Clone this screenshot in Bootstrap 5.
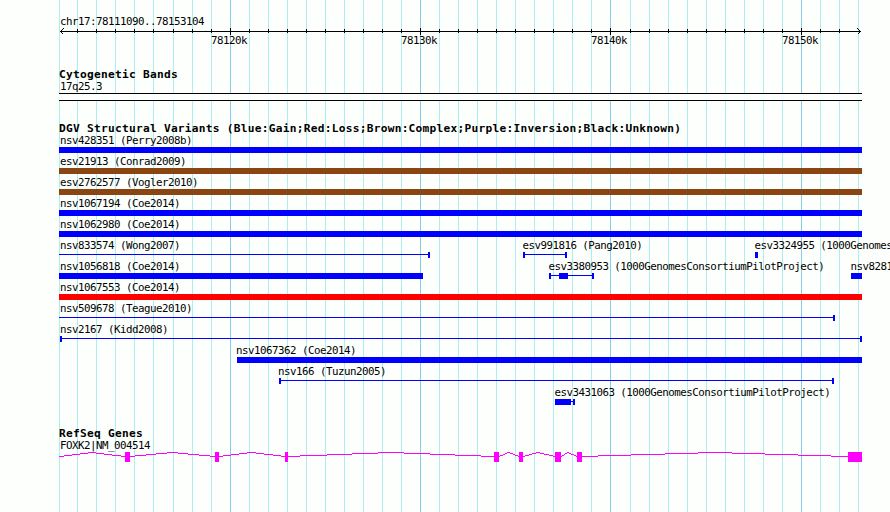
<!DOCTYPE html>
<html lang="en">
<head>
<meta charset="utf-8">
<meta name="viewport" content="width=device-width, initial-scale=1">
<title>chr17:78111090..78153104</title>
<link href="https://cdn.jsdelivr.net/npm/bootstrap@5.3.0/dist/css/bootstrap.min.css" rel="stylesheet">
<style>
body { background: #fdfffc; }
.browser-panel { width: 890px; height: 512px; }
.grid-layer { position: absolute; top: 0; left: 0; z-index: 0; }
.track-list { position: relative; z-index: 1; }
svg { display: block; flex: none; shape-rendering: crispEdges; }
text { font-family: "DejaVu Sans Mono", monospace; font-size: 10.8px; letter-spacing: -.502px; fill: #000; white-space: pre; }
.heading { font-weight: bold; font-size: 11.2px; letter-spacing: .257px; }
.gain { fill: #00f; }
.loss { fill: #f00; }
.complex { fill: #8b4513; }
.gene { fill: #f0f; }
.intron { fill: none; stroke: #f0f; stroke-width: 1; }
.minor { stroke: #afeeee; }
.major { stroke: #87ceeb; }
.ink { stroke: #000; fill: none; }
</style>
<script src="https://cdn.jsdelivr.net/npm/bootstrap@5.3.0/dist/js/bootstrap.bundle.min.js"></script>
</head>
<body>
<main class="browser-panel position-relative overflow-hidden">
  <!-- vertical scale lines: minor every 1 kb, major every 10 kb -->
  <svg class="grid-layer" width="890" height="512">
    <path class="minor" d="M59.5 0V512M77.5 0V512M96.5 0V512M115.5 0V512M134.5 0V512M153.5 0V512M173.5 0V512M192.5 0V512M211.5 0V512M249.5 0V512M268.5 0V512M287.5 0V512M306.5 0V512M325.5 0V512M344.5 0V512M363.5 0V512M382.5 0V512M401.5 0V512M439.5 0V512M458.5 0V512M477.5 0V512M496.5 0V512M515.5 0V512M534.5 0V512M553.5 0V512M572.5 0V512M591.5 0V512M630.5 0V512M649.5 0V512M668.5 0V512M687.5 0V512M706.5 0V512M725.5 0V512M744.5 0V512M763.5 0V512M782.5 0V512M820.5 0V512M839.5 0V512M858.5 0V512"/>
    <path class="major" d="M230.5 0V512M420.5 0V512M610.5 0V512M801.5 0V512"/>
  </svg>

  <div class="track-list d-flex flex-column">
    <!-- ruler -->
    <svg width="890" height="66">
      <path class="ink" d="M60 31.5H861M77.5 29V33M96.5 29V33M115.5 29V33M134.5 29V33M153.5 29V33M173.5 29V33M192.5 29V33M211.5 29V33M249.5 29V33M268.5 29V33M287.5 29V33M306.5 29V33M325.5 29V33M344.5 29V33M363.5 29V33M382.5 29V33M401.5 29V33M439.5 29V33M458.5 29V33M477.5 29V33M496.5 29V33M515.5 29V33M534.5 29V33M553.5 29V33M572.5 29V33M591.5 29V33M630.5 29V33M649.5 29V33M668.5 29V33M687.5 29V33M706.5 29V33M725.5 29V33M744.5 29V33M763.5 29V33M782.5 29V33M820.5 29V33M839.5 29V33M230.5 28V35M420.5 28V35M610.5 28V35M801.5 28V35"/>
      <path class="ink" d="M63.5 28.5L60.5 31.5L63.5 34.5M857.5 28.5L860.5 31.5L857.5 34.5"/>
      <text x="60" y="25">chr17:78111090..78153104</text>
      <text x="211" y="44">78120k</text>
      <text x="401" y="44">78130k</text>
      <text x="591" y="44">78140k</text>
      <text x="782" y="44">78150k</text>
    </svg>

    <!-- cytogenetic bands -->
    <svg width="890" height="54">
      <text class="heading" x="59" y="12">Cytogenetic Bands</text>
      <text x="60" y="24">17q25.3</text>
      <rect x="59" y="27" width="803" height="8" fill="#fdfffc"/>
      <path class="ink" d="M59 27.5H862M59 34.5H862"/>
    </svg>

    <!-- structural variants -->
    <svg width="890" height="15"><text class="heading" x="59" y="12">DGV Structural Variants (Blue:Gain;Red:Loss;Brown:Complex;Purple:Inversion;Black:Unknown)</text></svg>
    <svg width="890" height="21"><text x="60" y="9">nsv428351 (Perry2008b)</text><rect class="gain" x="59" y="12" width="803" height="6"/></svg>
    <svg width="890" height="21"><text x="60" y="9">esv21913 (Conrad2009)</text><rect class="complex" x="59" y="12" width="803" height="6"/></svg>
    <svg width="890" height="21"><text x="60" y="9">esv2762577 (Vogler2010)</text><rect class="complex" x="59" y="12" width="803" height="6"/></svg>
    <svg width="890" height="21"><text x="60" y="9">nsv1067194 (Coe2014)</text><rect class="gain" x="59" y="12" width="803" height="6"/></svg>
    <svg width="890" height="21"><text x="60" y="9">nsv1062980 (Coe2014)</text><rect class="gain" x="59" y="12" width="803" height="6"/></svg>
    <svg width="890" height="21">
      <text x="60" y="9">nsv833574 (Wong2007)</text><path class="gain" d="M59 14H428V12H430V18H428V15H59Z"/>
      <text x="522.4" y="9">esv991816 (Pang2010)</text><path class="gain" d="M523 12H525V14H565V12H567V18H565V15H525V18H523Z"/>
      <text x="754.4" y="9">esv3324955 (1000Genomes</text><rect class="gain" x="755" y="12" width="3" height="6"/>
    </svg>
    <svg width="890" height="21">
      <text x="60" y="9">nsv1056818 (Coe2014)</text><rect class="gain" x="59" y="12" width="364" height="6"/>
      <text x="548.4" y="9">esv3380953 (1000GenomesConsortiumPilotProject)</text><path class="gain" d="M549 12H551V14H559V12H568V14H592V12H594V18H592V15H568V18H559V15H551V18H549Z"/>
      <text x="850.4" y="9">nsv8281</text><rect class="gain" x="851" y="12" width="11" height="6"/>
    </svg>
    <svg width="890" height="21"><text x="60" y="9">nsv1067553 (Coe2014)</text><rect class="loss" x="59" y="12" width="803" height="6"/></svg>
    <svg width="890" height="21"><text x="60" y="9">nsv509678 (Teague2010)</text><path class="gain" d="M59 14H833V12H835V18H833V15H59Z"/></svg>
    <svg width="890" height="21"><text x="60" y="9">nsv2167 (Kidd2008)</text><path class="gain" d="M60 12H62V14H860V12H862V18H860V15H62V18H60Z"/></svg>
    <svg width="890" height="21"><text x="236" y="9">nsv1067362 (Coe2014)</text><rect class="gain" x="237" y="12" width="625" height="6"/></svg>
    <svg width="890" height="21"><text x="278" y="9">nsv166 (Tuzun2005)</text><path class="gain" d="M279 12H281V14H832V12H834V18H832V15H281V18H279Z"/></svg>
    <svg width="890" height="21"><text x="554.4" y="9">esv3431063 (1000GenomesConsortiumPilotProject)</text><path class="gain" d="M555 12H571V14H573V12H575V18H573V15H571V18H555Z"/></svg>

    <!-- genes: exons as blocks, introns as stepped peaks -->
    <svg width="890" height="104">
      <text class="heading" x="59" y="29">RefSeq Genes</text>
      <text x="60" y="41">FOXK2|NM_004514</text>
      <g class="intron">
        <path d="M59 48.5H64M64 47.5H72M72 46.5H80M80 45.5H88M88 44.5H96M96 45.5H104M104 46.5H112M112 47.5H121M121 48.5H125"/>
        <path d="M130 48.5H135M135 47.5H146M146 46.5H156M156 45.5H167M167 44.5H178M178 45.5H188M188 46.5H199M199 47.5H210M210 48.5H215"/>
        <path d="M219 48.5H223M223 47.5H231M231 46.5H239M239 45.5H247M247 44.5H256M256 45.5H264M264 46.5H273M273 47.5H281M281 48.5H285"/>
        <path d="M288 48.5H300M300 47.5H327M327 46.5H352M352 45.5H378M378 44.5H404M404 45.5H430M430 46.5H455M455 47.5H481M481 48.5H494"/>
        <path d="M499 48.5H500M500 47.5H503M503 46.5H505M505 45.5H507M507 44.5H510M510 45.5H513M513 46.5H515M515 47.5H518M518 48.5H519"/>
        <path d="M523 48.5H525M525 47.5H529M529 46.5H532M532 45.5H536M536 44.5H540M540 45.5H544M544 46.5H549M549 47.5H553M553 48.5H555"/>
        <path d="M561 48.5H562M562 47.5H564M564 46.5H565M565 45.5H567M567 44.5H569M569 45.5H571M571 46.5H574M574 47.5H576M576 48.5H577"/>
        <path d="M582 48.5H598M598 47.5H631M631 46.5H665M665 45.5H698M698 44.5H732M732 45.5H765M765 46.5H798M798 47.5H831M831 48.5H848"/>
      </g>
      <path class="gene" d="M125 44h5v10h-5zM215 44h4v10h-4zM285 44h3v10h-3zM494 44h5v10h-5zM519 44h4v10h-4zM555 44h6v10h-6zM577 44h5v10h-5zM848 44h14v10h-14z"/>
    </svg>
  </div>
</main>
</body>
</html>
